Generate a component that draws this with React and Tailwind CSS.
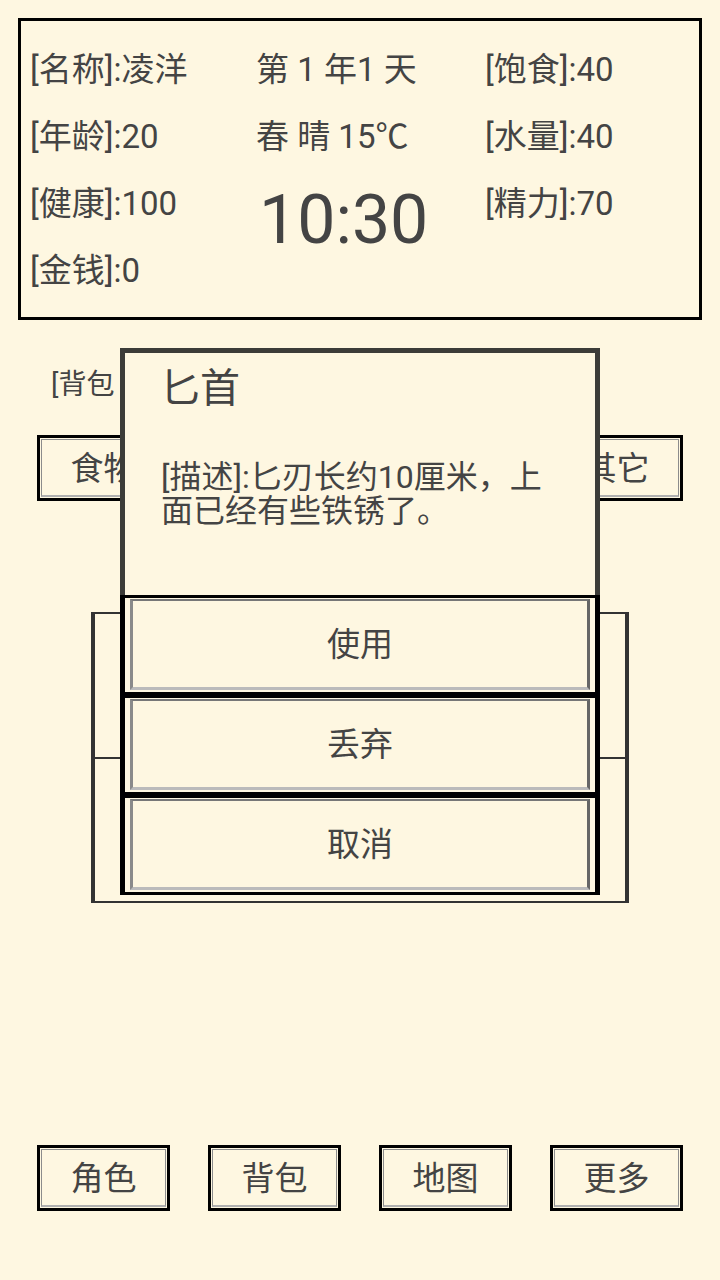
import React from "react";

function NavBtn({ label }) {
  return (
    <div className="w-[133px] h-[66px] border-[3px] border-black p-px">
      <div className="h-full border border-[#8c8c8c] border-b-2 border-b-[#b0b0b0] flex items-center justify-center text-[33px] leading-none text-[#444] pt-[2px]">
        {label}
      </div>
    </div>
  );
}

function DialogBtn({ label }) {
  return (
    <div className="h-[100px] border-black border-y-[3px] border-x-[5px] pt-px pb-[2px] px-[5px] bg-[#fef7e1]">
      <div className="h-full border-t-2 border-l-[3px] border-r-[3px] border-b-[3px] border-t-[#777] border-l-[#8a8a8a] border-r-[#666] border-b-[#bbb] flex items-center justify-center text-[33px] leading-none text-[#444]">
        {label}
      </div>
    </div>
  );
}

export default function App() {
  return (
    <div className="relative w-[720px] h-[1280px] bg-[#fef7e1] text-[#444] font-['Roboto','Noto_Sans_CJK_SC',sans-serif] flex flex-col overflow-hidden">
      {/* status panel */}
      <div className="mx-[18px] mt-[18px] h-[302px] border-[3px] border-black pl-[9px] pt-[15px] grid grid-cols-[226px_229px_1fr] text-[33px]">
        <div className="flex flex-col">
          <div className="h-[67px] leading-[67px] whitespace-nowrap">[名称]:凌洋</div>
          <div className="h-[67px] leading-[67px] whitespace-nowrap">[年龄]:20</div>
          <div className="h-[67px] leading-[67px] whitespace-nowrap">[健康]:100</div>
          <div className="h-[67px] leading-[67px] whitespace-nowrap">[金钱]:0</div>
        </div>
        <div className="flex flex-col">
          <div className="h-[67px] leading-[67px] whitespace-nowrap">第 1 年1 天</div>
          <div className="h-[67px] leading-[67px] whitespace-nowrap">春 晴 15℃</div>
          <div className="h-[100px] leading-[100px] text-[68px] pl-[3px] whitespace-nowrap">10:30</div>
        </div>
        <div className="flex flex-col">
          <div className="h-[67px] leading-[67px] whitespace-nowrap">[饱食]:40</div>
          <div className="h-[67px] leading-[67px] whitespace-nowrap">[水量]:40</div>
          <div className="h-[67px] leading-[67px] whitespace-nowrap">[精力]:70</div>
        </div>
      </div>

      {/* backpack label (mostly covered by the dialog) */}
      <div className="mt-[45px] ml-[51px] h-[40px] leading-[40px] text-[28px] whitespace-nowrap">
        [背包
      </div>

      {/* tabs */}
      <div className="mt-[30px] px-[37px] flex justify-between">
        <NavBtn label="食物" />
        <NavBtn label="" />
        <NavBtn label="" />
        <NavBtn label="其它" />
      </div>

      {/* item list */}
      <div className="mt-[111px] ml-[91px] w-[538px] h-[291px] border-x-4 border-y-2 border-[#333] flex flex-col">
        <div className="flex-1 border-b-2 border-[#333]"></div>
        <div className="flex-1"></div>
      </div>

      {/* bottom nav */}
      <div className="mt-auto mb-[69px] px-[37px] flex justify-between">
        <NavBtn label="角色" />
        <NavBtn label="背包" />
        <NavBtn label="地图" />
        <NavBtn label="更多" />
      </div>

      {/* item dialog */}
      <div className="absolute left-[120px] top-[348px] w-[480px] flex flex-col">
        <div className="h-[247px] border-[5px] border-b-0 border-[#3c3c38] bg-[#fef7e1]">
          <div className="pl-[35px] pt-[12px] text-[40px] leading-[48px]">匕首</div>
          <div className="px-[36px] mt-[47px] text-[32px] leading-[34px]">
            [描述]:匕刃长约10厘米，上面已经有些铁锈了。
          </div>
        </div>
        <DialogBtn label="使用" />
        <DialogBtn label="丢弃" />
        <DialogBtn label="取消" />
      </div>
    </div>
  );
}
